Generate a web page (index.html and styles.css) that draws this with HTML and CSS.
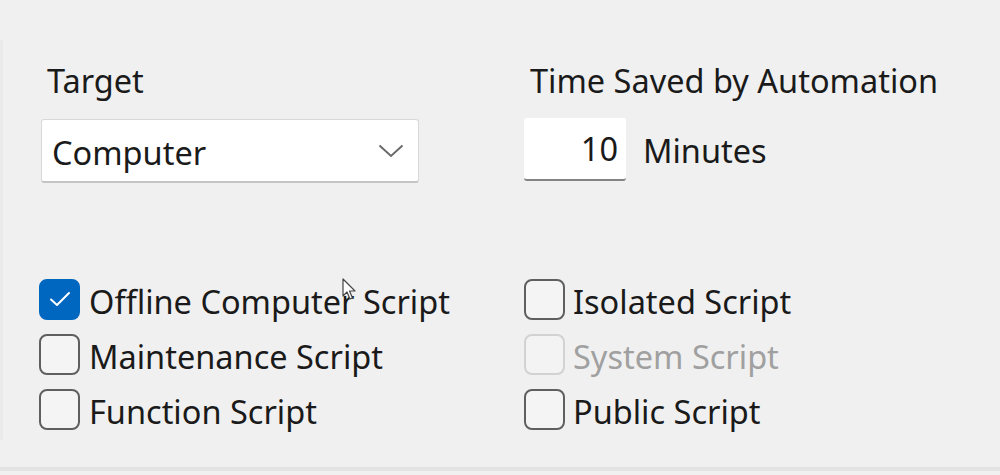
FILE: index.html
```html
<!DOCTYPE html>
<html>
<head>
<meta charset="utf-8">
<link rel="stylesheet" href="styles.css">
</head>
<body>
<div class="page">
  <div class="edge"></div>
  <div class="content">
    <div class="top">
      <div class="field">
        <div class="label label-target">Target</div>
        <div class="select">
          <span class="select-text">Computer</span>
          <svg class="chevron" width="26" height="14" viewBox="0 0 26 14"><path d="M1.5 1.5 L13 12 L24.5 1.5" fill="none" stroke="#6a6a6a" stroke-width="2"/></svg>
        </div>
      </div>
      <div class="field">
        <div class="label">Time Saved by Automation</div>
        <div class="time-row">
          <div class="num">10</div>
          <span class="unit">Minutes</span>
        </div>
      </div>
    </div>
    <div class="checks">
      <div class="col">
        <div class="check"><span class="box checked"><svg width="22" height="16" viewBox="0 0 22 16"><path d="M2 8.5 L8 14 L20 2" fill="none" stroke="#fff" stroke-width="2" stroke-linecap="round" stroke-linejoin="round"/></svg></span><span class="ctext">Offline Computer Script</span></div>
        <div class="check"><span class="box"></span><span class="ctext">Maintenance Script</span></div>
        <div class="check"><span class="box"></span><span class="ctext">Function Script</span></div>
      </div>
      <div class="col col-right">
        <div class="check"><span class="box"></span><span class="ctext">Isolated Script</span></div>
        <div class="check disabled"><span class="box"></span><span class="ctext">System Script</span></div>
        <div class="check"><span class="box"></span><span class="ctext">Public Script</span></div>
      </div>
    </div>
  </div>
  <svg class="cursor" width="16" height="24" viewBox="0 0 16 24"><path d="M1 1 L1 18 L5 14 L8 21 L10.5 20 L7.5 13 L13 13 Z" fill="#fff" stroke="#444" stroke-width="1.2" stroke-linejoin="round"/></svg>
  <div class="bottom-line"></div>
</div>
</body>
</html>
```

FILE: styles.css
```css
html, body {
  margin: 0;
  padding: 0;
  background: #f0f0f0;
}
body {
  width: 1000px;
  height: 475px;
  overflow: hidden;
  font-family: "Noto Sans", "Open Sans", sans-serif;
  color: #1a1a1a;
}
.page {
  position: relative;
  width: 1000px;
  height: 475px;
}
.edge {
  position: absolute;
  left: 0;
  top: 40px;
  width: 3px;
  height: 400px;
  background: #eaeaea;
}
.content {
  padding: 57px 0 0 39px;
}
.top {
  display: grid;
  grid-template-columns: 485px auto;
}
.label {
  font-size: 32.5px;
  line-height: 44px;
  height: 44px;
  padding-top: 2px;
  margin-left: 6px;
  margin-bottom: 16px;
}
.label-target {
  margin-left: 8px;
}
.select {
  width: 376px;
  height: 61px;
  margin-left: 2px;
  margin-top: 2px;
  background: #fff;
  border: 1px solid #d8d8d8;
  border-bottom: 2px solid #c4c4c4;
  border-radius: 3px;
  box-sizing: content-box;
  display: flex;
  align-items: center;
  justify-content: space-between;
}
.select-text {
  font-size: 32.5px;
  margin-left: 10px;
  margin-top: 3px;
}
.chevron {
  margin-right: 14px;
}
.time-row {
  display: flex;
  align-items: center;
  margin-top: -1px;
}
.num {
  width: 102px;
  height: 63px;
  box-sizing: border-box;
  background: #fff;
  border-radius: 3px;
  border-bottom: 2px solid #838383;
  font-size: 32.5px;
  text-align: right;
  padding-right: 8px;
  line-height: 62px;
}
.unit {
  font-size: 32.5px;
  margin-left: 17px;
  margin-top: 2px;
}
.checks {
  display: grid;
  grid-template-columns: 485px auto;
  margin-top: 95px;
}
.col {
  display: flex;
  flex-direction: column;
  gap: 13px;
}
.check {
  display: flex;
  align-items: center;
  height: 42px;
}
.box {
  width: 41px;
  height: 41px;
  flex: none;
  box-sizing: border-box;
  border: 2px solid #5f5f5f;
  border-radius: 8px;
  background: #f4f4f4;
  display: flex;
  align-items: center;
  justify-content: center;
}
.box.checked {
  background: #0067c0;
  border-color: #0067c0;
}
.ctext {
  font-size: 32.5px;
  margin-left: 9px;
  line-height: 42px;
  padding-top: 5px;
}
.col-right .ctext {
  margin-left: 8px;
}
.disabled .box {
  border-color: #d2d2d2;
  background: #f3f3f3;
}
.disabled .ctext {
  color: #a0a0a0;
}
.cursor {
  position: absolute;
  left: 342px;
  top: 278px;
}
.bottom-line {
  position: absolute;
  left: 0;
  top: 467px;
  width: 1000px;
  height: 4px;
  background: #e3e3e3;
}
```
